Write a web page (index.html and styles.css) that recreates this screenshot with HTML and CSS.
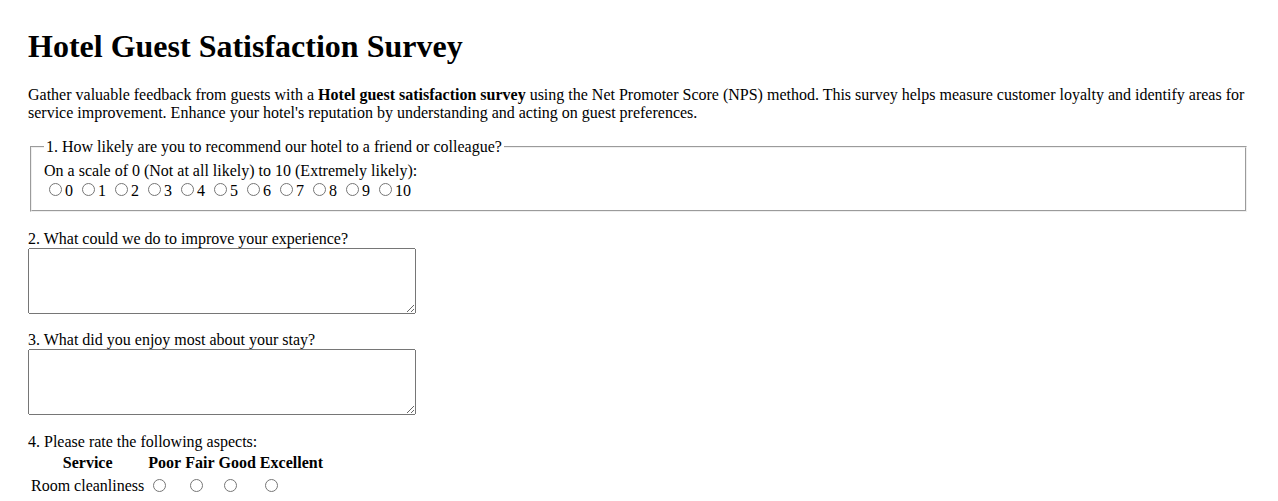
FILE: index.html
```html
<!DOCTYPE html>
<html lang="en">
<head>
<meta charset="utf-8">
<title>Hotel Guest Satisfaction Survey</title>
<link rel="stylesheet" href="styles.css">
</head>
<body>
<div class="page">
  <h1 class="title">Hotel Guest Satisfaction Survey</h1>
  <p class="intro">Gather valuable feedback from guests with a <strong>Hotel guest satisfaction survey</strong> using the Net Promoter Score (NPS) method. This survey helps measure customer loyalty and identify areas for service improvement. Enhance your hotel's reputation by understanding and acting on guest preferences.</p>
  <form class="survey">
    <fieldset class="nps">
      <legend>1. How likely are you to recommend our hotel to a friend or colleague?</legend>
      <div class="scale-label">On a scale of 0 (Not at all likely) to 10 (Extremely likely):</div>
      <div class="scale">
        <label><input type="radio" name="nps" value="0">0</label>
        <label><input type="radio" name="nps" value="1">1</label>
        <label><input type="radio" name="nps" value="2">2</label>
        <label><input type="radio" name="nps" value="3">3</label>
        <label><input type="radio" name="nps" value="4">4</label>
        <label><input type="radio" name="nps" value="5">5</label>
        <label><input type="radio" name="nps" value="6">6</label>
        <label><input type="radio" name="nps" value="7">7</label>
        <label><input type="radio" name="nps" value="8">8</label>
        <label><input type="radio" name="nps" value="9">9</label>
        <label><input type="radio" name="nps" value="10">10</label>
      </div>
    </fieldset>
    <div class="question">
      <label class="q-label" for="improve">2. What could we do to improve your experience?</label>
      <textarea class="answer" id="improve"></textarea>
    </div>
    <div class="question">
      <label class="q-label" for="enjoy">3. What did you enjoy most about your stay?</label>
      <textarea class="answer" id="enjoy"></textarea>
    </div>
    <div class="question">
      <div class="q-label">4. Please rate the following aspects:</div>
      <table class="rating">
        <tr>
          <th>Service</th>
          <th>Poor</th>
          <th>Fair</th>
          <th>Good</th>
          <th>Excellent</th>
        </tr>
        <tr>
          <td>Room cleanliness</td>
          <td><input type="radio" name="clean" value="poor"></td>
          <td><input type="radio" name="clean" value="fair"></td>
          <td><input type="radio" name="clean" value="good"></td>
          <td><input type="radio" name="clean" value="excellent"></td>
        </tr>
      </table>
    </div>
  </form>
</div>
</body>
</html>
```

FILE: styles.css
```css
html, body {
  margin: 0;
  background: #ffffff;
}

body {
  font-family: "Liberation Serif", "Times New Roman", serif;
  font-size: 16px;
  color: #000000;
}

.page {
  padding: 28px 29px 28px 28px;
}

.title {
  font-size: 32px;
  font-weight: bold;
  margin: 0 0 21.44px 0;
}

.intro {
  margin: 0 0 16px 0;
}

.survey {
  margin: 0;
}

.nps {
  margin: 0 2px;
}

.question {
  margin-top: 17.6px;
}

.q-label {
  display: block;
}

.answer {
  display: block;
  box-sizing: border-box;
  width: 388px;
  height: 66px;
  margin: 0 0 2px 0;
}

.rating {
  border-spacing: 2px;
}

.rating th,
.rating td {
  padding: 1px;
}

.rating td {
  text-align: left;
}

input[type="radio"] {
  width: 13px;
  height: 13px;
}
```
